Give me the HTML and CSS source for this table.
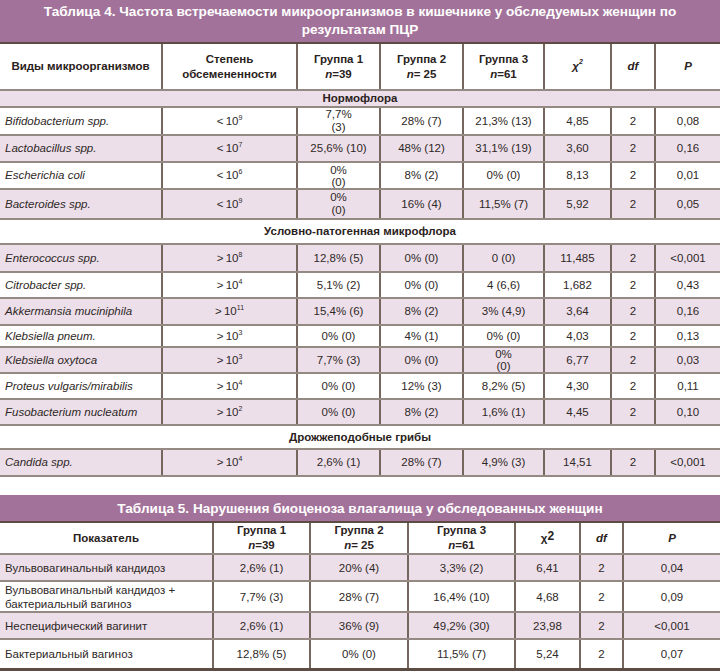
FILE: index.html
```html
<!DOCTYPE html>
<html lang="ru">
<head>
<meta charset="utf-8">
<title>Таблицы</title>
<link rel="stylesheet" href="styles.css">
</head>
<body>
<section class="block t4">
  <div class="title">Таблица 4. Частота встречаемости микроорганизмов в кишечнике у обследуемых женщин по<br>результатам ПЦР</div>
  <table class="grid">
    <colgroup>
      <col style="width:162px"><col style="width:135px"><col style="width:83px"><col style="width:83px"><col style="width:81px"><col style="width:67px"><col style="width:44px"><col style="width:65px">
    </colgroup>
    <thead>
      <tr class="head h46">
        <th>Виды микроорганизмов</th>
        <th>Степень<br>обсемененности</th>
        <th>Группа 1<br><i>n</i>=39</th>
        <th>Группа 2<br><i>n</i>= 25</th>
        <th>Группа 3<br><i>n</i>=61</th>
        <th><i>χ<sup class="chi">2</sup></i></th>
        <th><i>df</i></th>
        <th><i>P</i></th>
      </tr>
    </thead>
    <tbody>
      <tr class="sec pink h17"><td colspan="8">Нормофлора</td></tr>
      <tr class="h28"><td class="name"><i>Bifidobacterium spp.</i></td><td>&lt;&#8201;10<sup>9</sup></td><td>7,7%<br>(3)</td><td>28% (7)</td><td>21,3% (13)</td><td>4,85</td><td>2</td><td>0,08</td></tr>
      <tr class="pink h27"><td class="name"><i>Lactobacillus spp.</i></td><td>&lt;&#8201;10<sup>7</sup></td><td>25,6% (10)</td><td>48% (12)</td><td>31,1% (19)</td><td>3,60</td><td>2</td><td>0,16</td></tr>
      <tr class="h27"><td class="name"><i>Escherichia coli</i></td><td>&lt;&#8201;10<sup>6</sup></td><td class="tight">0%<br>(0)</td><td>8% (2)</td><td>0% (0)</td><td>8,13</td><td>2</td><td>0,01</td></tr>
      <tr class="pink h30"><td class="name"><i>Bacteroides spp.</i></td><td>&lt;&#8201;10<sup>9</sup></td><td>0%<br>(0)</td><td>16% (4)</td><td>11,5% (7)</td><td>5,92</td><td>2</td><td>0,05</td></tr>
      <tr class="sec h25"><td colspan="8">Условно-патогенная микрофлора</td></tr>
      <tr class="pink h28"><td class="name"><i>Enterococcus spp.</i></td><td>&gt;&#8201;10<sup>8</sup></td><td>12,8% (5)</td><td>0% (0)</td><td>0 (0)</td><td>11,485</td><td>2</td><td>&lt;0,001</td></tr>
      <tr class="h26"><td class="name"><i>Citrobacter spp.</i></td><td>&gt;&#8201;10<sup>4</sup></td><td>5,1% (2)</td><td>0% (0)</td><td>4 (6,6)</td><td>1,682</td><td>2</td><td>0,43</td></tr>
      <tr class="pink h27"><td class="name"><i>Akkermansia muciniphila</i></td><td>&gt;&#8201;10<sup>11</sup></td><td>15,4% (6)</td><td>8% (2)</td><td>3% (4,9)</td><td>3,64</td><td>2</td><td>0,16</td></tr>
      <tr class="h22"><td class="name"><i>Klebsiella pneum.</i></td><td>&gt;&#8201;10<sup>3</sup></td><td>0% (0)</td><td>4% (1)</td><td>0% (0)</td><td>4,03</td><td>2</td><td>0,13</td></tr>
      <tr class="pink h26"><td class="name"><i>Klebsiella oxytoca</i></td><td>&gt;&#8201;10<sup>3</sup></td><td>7,7% (3)</td><td>0% (0)</td><td class="tight">0%<br>(0)</td><td>6,77</td><td>2</td><td>0,03</td></tr>
      <tr class="h26"><td class="name"><i>Proteus vulgaris/mirabilis</i></td><td>&gt;&#8201;10<sup>4</sup></td><td>0% (0)</td><td>12% (3)</td><td>8,2% (5)</td><td>4,30</td><td>2</td><td>0,11</td></tr>
      <tr class="pink h26"><td class="name"><i>Fusobacterium nucleatum</i></td><td>&gt;&#8201;10<sup>2</sup></td><td>0% (0)</td><td>8% (2)</td><td>1,6% (1)</td><td>4,45</td><td>2</td><td>0,10</td></tr>
      <tr class="sec h24"><td colspan="8">Дрожжеподобные грибы</td></tr>
      <tr class="pink h27"><td class="name"><i>Candida spp.</i></td><td>&gt;&#8201;10<sup>4</sup></td><td>2,6% (1)</td><td>28% (7)</td><td>4,9% (3)</td><td>14,51</td><td>2</td><td>&lt;0,001</td></tr>
    </tbody>
  </table>
</section>

<section class="block t5">
  <div class="title single">Таблица 5. Нарушения биоценоза влагалища у обследованных женщин</div>
  <table class="grid last">
    <colgroup>
      <col style="width:213px"><col style="width:97px"><col style="width:98px"><col style="width:107px"><col style="width:65px"><col style="width:43px"><col style="width:97px">
    </colgroup>
    <thead>
      <tr class="head h31">
        <th>Показатель</th>
        <th>Группа 1<br><i>n</i>=39</th>
        <th>Группа 2<br><i>n</i>= 25</th>
        <th>Группа 3<br><i>n</i>=61</th>
        <th>χ<span class="two">2</span></th>
        <th><i>df</i></th>
        <th><i>P</i></th>
      </tr>
    </thead>
    <tbody>
      <tr class="pink h27"><td class="name">Вульвовагинальный кандидоз</td><td>2,6% (1)</td><td>20% (4)</td><td>3,3% (2)</td><td>6,41</td><td>2</td><td>0,04</td></tr>
      <tr class="h31"><td class="name">Вульвовагинальный кандидоз +<br>бактериальный вагиноз</td><td>7,7% (3)</td><td>28% (7)</td><td>16,4% (10)</td><td>4,68</td><td>2</td><td>0,09</td></tr>
      <tr class="pink h27"><td class="name">Неспецифический вагинит</td><td>2,6% (1)</td><td>36% (9)</td><td>49,2% (30)</td><td>23,98</td><td>2</td><td>&lt;0,001</td></tr>
      <tr class="h30"><td class="name">Бактериальный вагиноз</td><td>12,8% (5)</td><td>0% (0)</td><td>11,5% (7)</td><td>5,24</td><td>2</td><td>0,07</td></tr>
    </tbody>
  </table>
</section>
</body>
</html>
```
FILE: styles.css
```css
* { box-sizing: border-box; }

html, body {
  margin: 0;
  padding: 0;
  background: #ffffff;
}

body {
  width: 720px;
  font-family: "Liberation Sans", Arial, "Noto Sans", sans-serif;
  color: #2e2826;
}

.block {
  width: 720px;
}

.t5 {
  margin-top: 18px;
}

.title {
  background: #a3729a;
  color: #ffffff;
  font-weight: bold;
  font-size: 13.6px;
  line-height: 18px;
  text-align: center;
  padding: 3px 8px 3px;
  height: 44px;
  border-bottom: 2px solid #5d4c44;
}

.title.single {
  height: 28px;
  padding-top: 5px;
}

.grid {
  width: 720px;
  border-collapse: collapse;
  table-layout: fixed;
  font-size: 11.5px;
  line-height: 13px;
}

.grid th,
.grid td {
  padding: 0 3px;
  text-align: center;
  vertical-align: middle;
  border-left: 2px solid #75675e;
  border-bottom: 2px solid #958a83;
}

.grid td.tight {
  line-height: 12px;
}

.grid thead th {
  line-height: 15px;
}

.grid.last tbody td {
  line-height: 14px;
}

.grid th:first-child,
.grid td:first-child {
  border-left: none;
}

.grid th {
  font-weight: bold;
  color: #2a2220;
}

.grid td.name {
  text-align: left;
  padding-left: 5px;
}

.grid .sec td {
  font-weight: bold;
  text-align: center;
  color: #2a2220;
}

.grid.last tbody tr:last-child td {
  border-bottom: 3px solid #5d4c44;
}

.pink td {
  background: #eddfea;
}

sup {
  font-size: 7px;
  line-height: 0;
  vertical-align: 5px;
}

sup.chi {
  font-size: 7px;
  vertical-align: 6px;
}

.two {
  font-size: 12px;
  position: relative;
  top: -2px;
}

.h17 { height: 17px; }
.h22 { height: 22px; }
.h24 { height: 24px; }
.h25 { height: 25px; }
.h26 { height: 26px; }
.h27 { height: 27px; }
.h28 { height: 28px; }
.h30 { height: 30px; }
.h31 { height: 31px; }
.h46 { height: 46px; }
```
